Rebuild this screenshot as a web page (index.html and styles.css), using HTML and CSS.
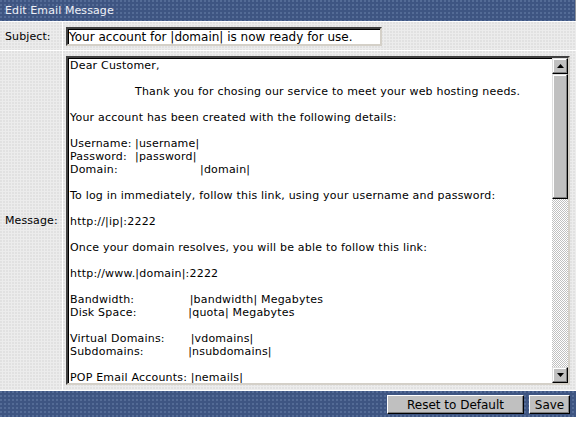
FILE: index.html
```html
<!DOCTYPE html>
<html>
<head>
<meta charset="utf-8">
<link rel="stylesheet" href="styles.css">
</head>
<body>
<form class="panel">
  <div class="title">Edit Email Message</div>
  <label class="label" for="subject">Subject:</label>
  <div class="field"><input id="subject" class="subject" type="text" value="Your account for |domain| is now ready for use."></div>
  <label class="label" for="message">Message:</label>
  <div class="field">
    <div class="textbox">
      <textarea id="message" class="message">Dear Customer,

		Thank you for chosing our service to meet your web hosting needs.

Your account has been created with the following details:

Username:	|username|
Password:	|password|
Domain:			|domain|

To log in immediately, follow this link, using your username and password:

http://|ip|:2222

Once your domain resolves, you will be able to follow this link:

http://www.|domain|:2222

Bandwidth:               |bandwidth| Megabytes
Disk Space:              |quota| Megabytes

Virtual Domains:       |vdomains|
Subdomains:            |nsubdomains|

POP Email Accounts: |nemails|
Forwarders:             |nemailf|
Mailing Lists:          |nemailml|
Autoresponders:        |nemailr|
MySQL Databases:     |mysql|
Domain Pointers:      |domainptr|
FTP Accounts:          |ftp|

Anonymous FTP:       |aftp|
CGI-Bin:                  |cgi|
PHP:                       |php|
SSL:                        |ssl|
SSH:                        |ssh|

Name Servers:
|ns1|
|ns2|

Thank you for your confidence,
Support</textarea>
      <div class="scrollbar" aria-hidden="true">
        <div class="sb-btn"><svg width="7" height="4" viewBox="0 0 7 4"><path d="M0 4h7L3.5 0z" fill="#000"/></svg></div>
        <div class="sb-thumb"></div>
        <div class="sb-track"></div>
        <div class="sb-btn"><svg width="7" height="4" viewBox="0 0 7 4"><path d="M0 0h7L3.5 4z" fill="#000"/></svg></div>
      </div>
    </div>
  </div>
  <div class="footer">
    <button type="button" class="btn btn-reset">Reset to Default</button>
    <button type="button" class="btn btn-save">Save</button>
  </div>
</form>
</body>
</html>
```

FILE: styles.css
```css
html, body {
  margin: 0;
  padding: 0;
  background: #ffffff;
}

.panel {
  width: 576px;
  margin: 0;
  display: grid;
  grid-template-columns: 62px 1fr;
  grid-template-rows: 21px 28px 339px 26px;
  gap: 1px;
  background: #ffffff;
  font-family: "DejaVu Sans", Verdana, sans-serif;
  font-size: 11px;
  color: #000;
}

.title {
  grid-column: 1 / 3;
  background-color: #3e5582;
  background-image: radial-gradient(circle at 1px 1px, #566d98 0.7px, transparent 0.8px);
  background-size: 4px 4px;
  color: #eef0f6;
  font-size: 11px;
  letter-spacing: 0.1px;
  line-height: 21px;
  padding-left: 5px;
  border-right: 1px solid #8a8f99;
}

.label {
  background-color: #ececec;
  background-image: radial-gradient(circle at 1px 1px, #e0e0e0 0.7px, transparent 0.8px);
  background-size: 3px 3px;
  padding-left: 5px;
  display: flex;
  align-items: center;
  white-space: nowrap;
  letter-spacing: 0.1px;
}

.field {
  background-color: #ececec;
  background-image: radial-gradient(circle at 1px 1px, #e0e0e0 0.7px, transparent 0.8px);
  background-size: 3px 3px;
  padding: 5px 0 0 3px;
}

.subject {
  box-sizing: border-box;
  width: 316px;
  height: 19px;
  margin: 0;
  padding: 0 0 0 1px;
  border: 2px solid;
  border-color: #404040 #d4d0c8 #d4d0c8 #404040;
  box-shadow: inset 1px 1px 0 #000;
  background: #fff;
  font: 12px "DejaVu Sans", Verdana, sans-serif;
  color: #000;
}

.textbox {
  box-sizing: border-box;
  width: 504px;
  height: 329px;
  display: flex;
  border: 2px solid;
  border-color: #404040 #d4d0c8 #d4d0c8 #404040;
  box-shadow: inset 1px 1px 0 #000;
  background: #fff;
}

.message {
  flex: 1;
  min-width: 0;
  height: 100%;
  box-sizing: border-box;
  margin: 0;
  padding: 1px 2px 0 2px;
  border: 0;
  outline: none;
  background: transparent;
  font: 11px/13px "DejaVu Sans", Verdana, sans-serif;
  letter-spacing: 0.2px;
  color: #000;
  tab-size: 32.5px;
  -moz-tab-size: 32.5px;
  resize: none;
  white-space: pre-wrap;
  overflow: hidden;
}

.scrollbar {
  width: 16px;
  display: flex;
  flex-direction: column;
  flex: none;
}

.sb-btn,
.sb-thumb {
  box-sizing: border-box;
  background: #c0c0c0;
  border: 1px solid;
  border-color: #dfdfdf #000 #000 #dfdfdf;
  box-shadow: inset -1px -1px 0 #808080, inset 1px 1px 0 #fff;
}

.sb-btn {
  height: 16px;
  display: flex;
  align-items: center;
  justify-content: center;
  flex: none;
}

.sb-btn svg {
  display: block;
}

.sb-thumb {
  height: 125px;
  flex: none;
}

.sb-track {
  flex: 1;
  background-color: #ffffff;
  background-image: conic-gradient(#c0c0c0 25%, #ffffff 0 50%, #c0c0c0 0 75%, #ffffff 0);
  background-size: 2px 2px;
}

.footer {
  grid-column: 1 / 3;
  background-color: #3e5582;
  background-image: radial-gradient(circle at 1px 1px, #566d98 0.7px, transparent 0.8px);
  background-size: 4px 4px;
  display: flex;
  justify-content: flex-end;
  align-items: flex-start;
  gap: 5px;
  padding: 4px 6px 0 0;
}

.btn {
  box-sizing: border-box;
  height: 19px;
  margin: 0;
  padding: 0;
  background: #c0c0c0;
  border: 1px solid;
  border-color: #fff #000 #000 #fff;
  box-shadow: inset -1px -1px 0 #808080;
  font: 12px "DejaVu Sans", Verdana, sans-serif;
  color: #000;
  line-height: 16px;
  text-align: center;
}

.btn-reset {
  width: 137px;
}

.btn-save {
  width: 41px;
}
```
